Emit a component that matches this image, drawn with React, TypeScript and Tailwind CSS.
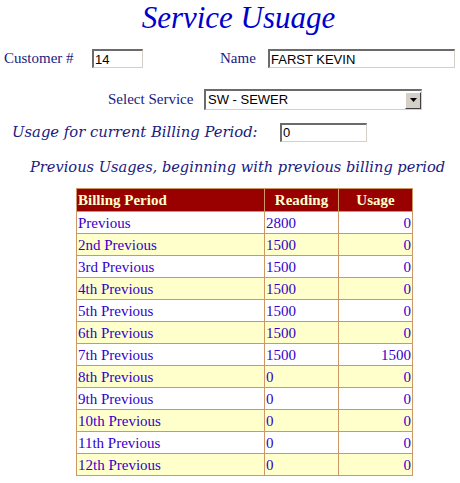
import React from "react";

const rows: [string, string, string][] = [
  ["Previous", "2800", "0"],
  ["2nd Previous", "1500", "0"],
  ["3rd Previous", "1500", "0"],
  ["4th Previous", "1500", "0"],
  ["5th Previous", "1500", "0"],
  ["6th Previous", "1500", "0"],
  ["7th Previous", "1500", "1500"],
  ["8th Previous", "0", "0"],
  ["9th Previous", "0", "0"],
  ["10th Previous", "0", "0"],
  ["11th Previous", "0", "0"],
  ["12th Previous", "0", "0"],
];

function Field({ value, w }: { value: string; w: string }) {
  return (
    <div
      className={`${w} h-[19px] bg-white border-t-2 border-l-2 border-r border-b border-t-[#6b6b6b] border-l-[#6b6b6b] border-r-[#d4d0c8] border-b-[#d4d0c8] flex items-center pl-[1px] text-[13px] text-black leading-none`}
      style={{ fontFamily: '"Liberation Sans", Arial, sans-serif' }}
    >
      {value}
    </div>
  );
}

export default function App() {
  const serif = { fontFamily: '"Liberation Serif", "Times New Roman", serif' };
  const ital = { fontFamily: '"DejaVu Serif", serif' };
  return (
    <div className="w-[460px] h-[483px] bg-white overflow-hidden" style={serif}>
      <div className="h-[42px] flex justify-center pl-[17px] pt-[0px]">
        <span className="italic text-[31px] leading-[36px] text-[#0000cc]">Service Usuage</span>
      </div>
      <div className="flex items-center h-[19px] mt-[7px] text-[15px] text-[#1a1a80]">
        <span className="ml-[4px] w-[88px]">Customer #</span>
        <Field value="14" w="w-[51px]" />
        <span className="ml-[77px] w-[48px]">Name</span>
        <Field value="FARST KEVIN" w="w-[187px]" />
      </div>
      <div className="flex items-center h-[21px] mt-[21px] text-[15px] text-[#1a1a80]">
        <span className="ml-[108px] w-[96px]">Select Service</span>
        <div
          className="w-[218px] h-[21px] border-t-2 border-l-2 border-r border-b border-t-[#6b6b6b] border-l-[#6b6b6b] border-r-[#d4d0c8] border-b-[#d4d0c8] bg-white flex items-center text-[13px] text-black"
          style={{ fontFamily: '"Liberation Sans", Arial, sans-serif' }}
        >
          <span className="flex-1 pl-[2px]">SW - SEWER</span>
          <div className="w-[16px] h-[17px] bg-[#d4d0c8] border border-t-white border-l-white border-r-[#404040] border-b-[#404040] flex items-center justify-center">
            <svg width="7" height="4" viewBox="0 0 7 4"><path d="M0 0h7L3.5 4z" fill="#000" /></svg>
          </div>
        </div>
      </div>
      <div className="flex items-center h-[20px] mt-[12px] text-[#1a1a80]">
        <span className="ml-[12px] w-[268px] italic text-[14.8px] whitespace-nowrap" style={ital}>
          Usage for current Billing Period:
        </span>
        <Field value="0" w="w-[87px]" />
      </div>
      <div className="mt-[15px] ml-[30px] italic text-[14.6px] text-[#1a1a80] leading-[20px] whitespace-nowrap" style={ital}>
        Previous Usages, beginning with previous billing period
      </div>
      <table className="ml-[76px] mt-[11px] border-collapse text-[15px]" style={serif}>
        <thead>
          <tr className="bg-[#990000] text-[#ffffcc] font-bold h-[23px]">
            <th className="w-[188px] border border-[#cc9966] text-left px-[1px] leading-[20px]">Billing Period</th>
            <th className="w-[74px] border border-[#cc9966] text-center leading-[20px]">Reading</th>
            <th className="w-[74px] border border-[#cc9966] text-center leading-[20px]">Usage</th>
          </tr>
        </thead>
        <tbody className="text-[#3300cc]">
          {rows.map((r, i) => (
            <tr key={i} className={`h-[22px] ${i % 2 === 1 ? "bg-[#ffffcc]" : "bg-white"}`}>
              <td className="border border-[#cc9966] px-[1px] leading-[20px]">{r[0]}</td>
              <td className="border border-[#cc9966] px-[1px] leading-[20px]">{r[1]}</td>
              <td className="border border-[#cc9966] px-[1px] text-right leading-[20px]">{r[2]}</td>
            </tr>
          ))}
        </tbody>
      </table>
    </div>
  );
}
